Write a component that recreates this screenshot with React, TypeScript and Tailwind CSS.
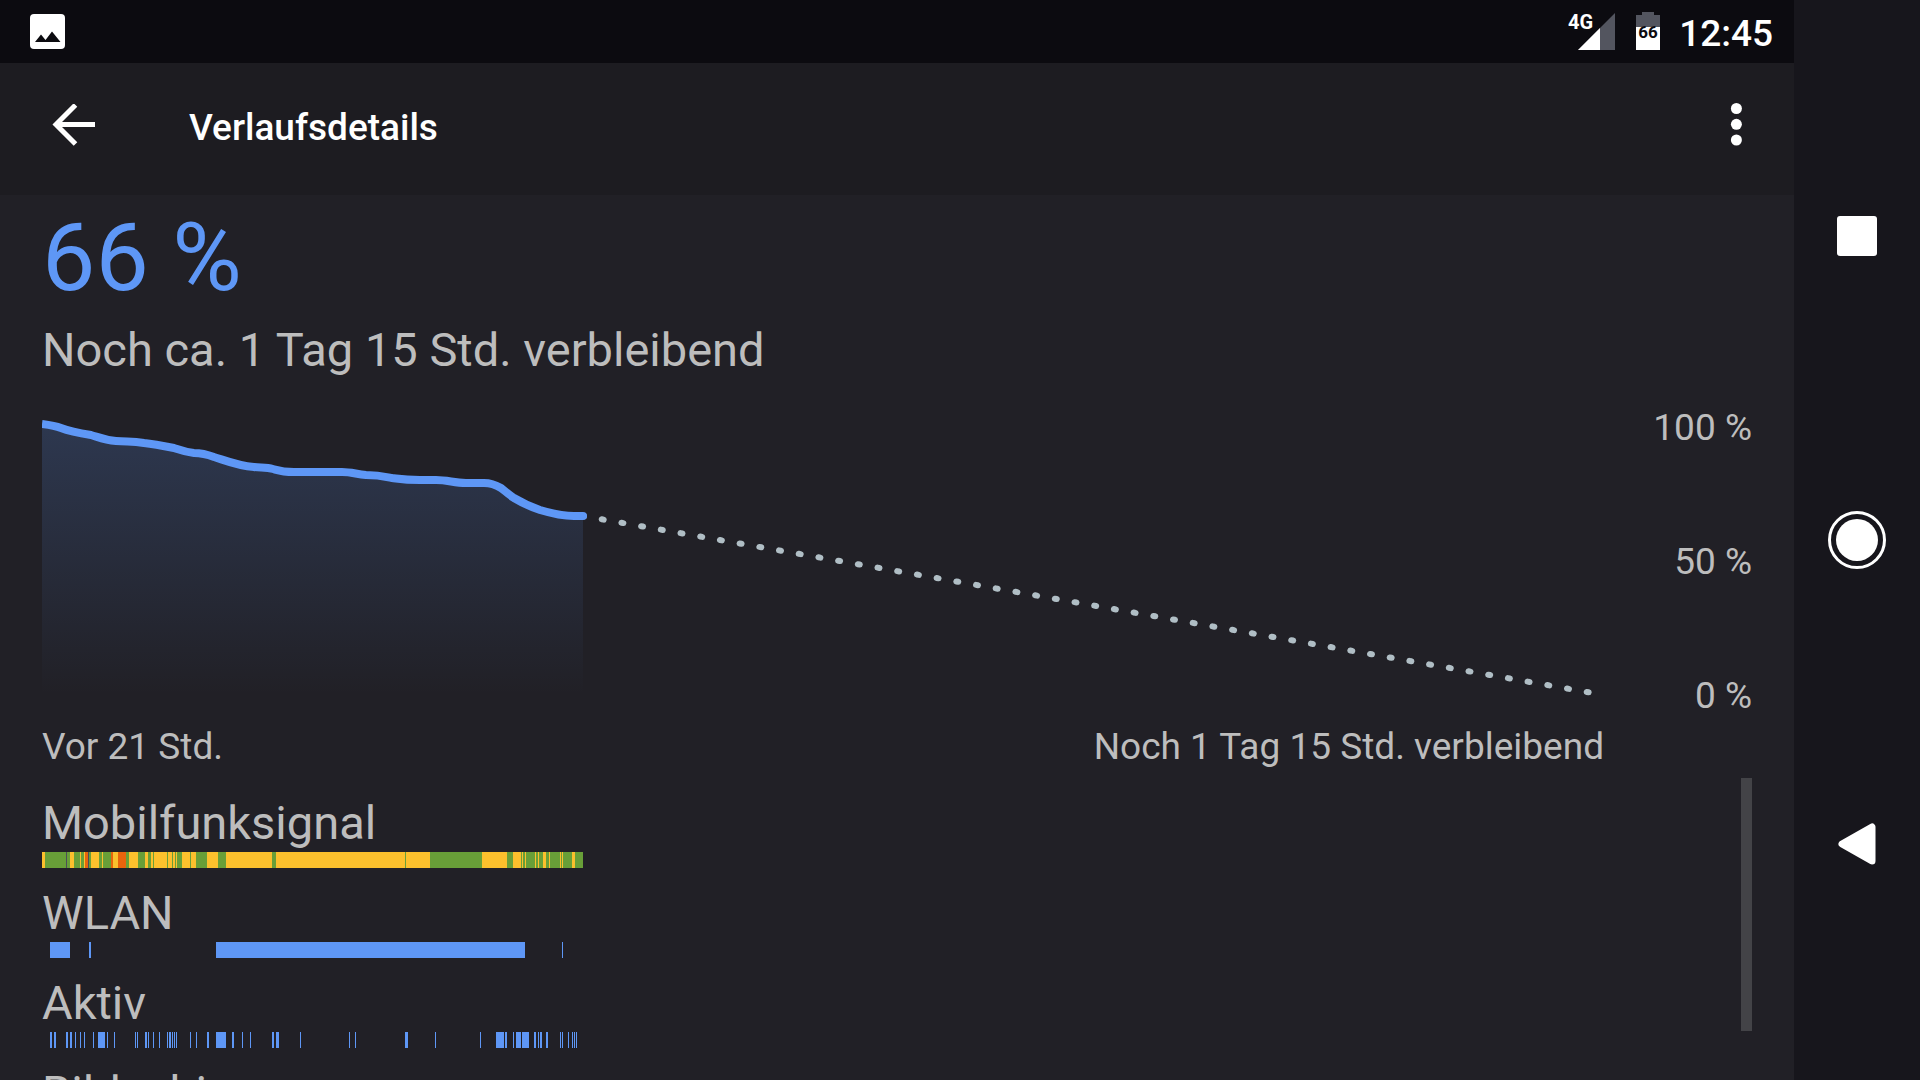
import React from "react";

type Span = [number, number];

// width of the time axis, the measured part ends at 541
const SPAN = 1562;

const LEVEL_PATH =
  "M0 24 C8 25 14 26 19 28 C24 30 36 33 49 35 C56 37 62 40 74 41 C86 42 90 41 102 43 C112 44 122 46 132 48 C138 50 142 52 152 53 C160 53 164 54 172 57 C182 60 196 66 212 67 C218 68 224 67 231 69 C238 71 240 72 252 72 L300 72 C309 72 314 74 324 75 C336 75 340 76 350 78 C358 79 362 80 378 80 L394 80 C406 80 412 83 424 83 L442 83 C450 83 454 85 459 88 C463 91 466 94 472 98 C482 104 492 108 498 110 C508 113 522 116 532 116 L541 116";

const COLORS = {
  green: "#689f38",
  yellow: "#fbc02d",
  orange: "#e8640c",
  gray: "#4c4e58",
  blue: "#5e97f6",
};

const greenSpans: Span[] = [
  [3, 24], [25, 28], [32, 38], [39, 42], [47, 49], [57, 60], [61, 69], [84, 87],
  [96, 103], [106, 109], [111, 112], [125, 126], [130, 131], [133, 134], [135, 140],
  [148, 149], [154, 165], [176, 184], [230, 234], [363, 364], [388, 440], [465, 471],
  [479, 480], [481, 483], [484, 493], [494, 496], [497, 501], [504, 507], [508, 518],
  [519, 520], [521, 530], [533, 541],
];

const activeSpans: Span[] = [
  [8, 10], [12, 14], [24, 26], [28, 30], [33, 34], [38, 39], [42, 43], [51, 52],
  [56, 63], [65, 66], [72, 73], [93, 94], [95, 96], [103, 105], [106, 107], [111, 112],
  [117, 118], [125, 126], [127, 129], [130, 131], [132, 133], [134, 135], [148, 149],
  [154, 155], [165, 167], [174, 184], [190, 192], [200, 201], [208, 209], [230, 232],
  [234, 237], [258, 259], [307, 308], [313, 314], [363, 366], [393, 394], [438, 439],
  [454, 462], [463, 465], [471, 472], [474, 479], [480, 487], [492, 494], [496, 497],
  [498, 500], [504, 506], [518, 519], [520, 521], [526, 527], [530, 531], [532, 533],
  [534, 535],
];

const rows = [
  {
    label: "Mobilfunksignal",
    layers: [
      { color: COLORS.yellow, spans: [[0, 541]] as Span[] },
      { color: COLORS.green, spans: greenSpans },
      { color: COLORS.orange, spans: [[43, 46], [69, 71], [76, 84]] as Span[] },
      { color: COLORS.gray, spans: [[24, 25], [46, 47]] as Span[] },
    ],
  },
  {
    label: "WLAN",
    layers: [{ color: COLORS.blue, spans: [[8, 28], [47, 49], [174, 483], [520, 521]] as Span[] }],
  },
  { label: "Aktiv", layers: [{ color: COLORS.blue, spans: activeSpans }] },
  { label: "Bildschirm an", layers: [] },
];

const StatusBar: React.FC = () => (
  <div className="flex h-[63px] shrink-0 items-center justify-between bg-[#0c0b10] pl-[30px] pr-[21px]">
    <svg className="h-[35px] w-[35px]" viewBox="0 0 35 35">
      <rect width="35" height="35" rx="4" fill="#fff" />
      <path d="M5 28 L11 20.5 L15.5 26 L22 17.5 L30.5 28 Z" fill="#0c0b10" />
    </svg>
    <div className="flex items-center">
      <svg className="h-[63px] w-[48px]" viewBox="0 0 48 63">
        <path d="M47 13 V50 H10 Z" fill="#53555f" />
        <path d="M32 28 V50 H10 Z" fill="#fff" />
        <text x="0" y="29" fontSize="20" fontWeight="700" fill="#fff" className="font-['Roboto',sans-serif]">
          4G
        </text>
      </svg>
      <svg className="ml-5 h-[63px] w-6" viewBox="0 0 24 63">
        <path d="M0 15 H6 V12 H18 V15 H24 V27 H0 Z" fill="#53555f" />
        <path d="M0 27 H24 V50 H0 Z" fill="#fff" />
        <text x="12" y="38" textAnchor="middle" fontSize="17" fontWeight="700" fill="#0c0b10" className="font-['Roboto',sans-serif]">
          66
        </text>
      </svg>
      <span className="ml-[19px] pt-1 text-[37px] font-medium leading-[44px]">12:45</span>
    </div>
  </div>
);

const Toolbar: React.FC = () => (
  <header className="flex h-[132px] shrink-0 items-center bg-[#1d1c21] pb-2 pl-[42px] pr-[26px]">
    <button type="button" aria-label="Zurück" className="flex h-16 w-16 items-center">
      <svg className="h-[42px] w-[64px]" viewBox="0 0 64 42">
        <path d="M53 20.5 H14 M33.500 1 L14 20.5 L33.500 40" fill="none" stroke="#fff" strokeWidth="5" />
      </svg>
    </button>
    <h1 className="ml-[83px] flex-1 pt-1.5 text-[37px] font-medium leading-[44px]">Verlaufsdetails</h1>
    <button type="button" aria-label="Weitere Optionen" className="flex h-16 w-16 items-center justify-center">
      <svg className="h-[44px] w-3" viewBox="0 0 12 44">
        <circle cx="6.400" cy="5.500" r="5.500" fill="#fff" />
        <circle cx="6.400" cy="21.300" r="5.500" fill="#fff" />
        <circle cx="6.400" cy="37" r="5.500" fill="#fff" />
      </svg>
    </button>
  </header>
);

const UsageChart: React.FC = () => (
  <div className="mt-[22px] flex h-[318px]">
    <svg className="h-[300px] min-w-0 flex-1" viewBox={`0 0 ${SPAN} 300`} preserveAspectRatio="none">
      <defs>
        <linearGradient id="level" x1="0" y1="24" x2="0" y2="295" gradientUnits="userSpaceOnUse">
          <stop offset="0" stopColor="#5e97f6" stopOpacity="0.2" />
          <stop offset="1" stopColor="#5e97f6" stopOpacity="0" />
        </linearGradient>
      </defs>
      <path d={`${LEVEL_PATH} V295 H0 Z`} fill="url(#level)" />
      <path
        d="M541 116 L1562 295"
        fill="none"
        stroke="#b0bec5"
        strokeWidth="6"
        strokeLinecap="round"
        strokeDasharray="2 18"
        strokeDashoffset="-19"
      />
      <path d={LEVEL_PATH} fill="none" stroke="#5e97f6" strokeWidth="8" />
      <circle cx="541" cy="116" r="4" fill="#5e97f6" />
    </svg>
    <div className="flex w-[148px] flex-col justify-between pt-1.5 text-right text-[37px] leading-[44px]">
      <span>100 %</span>
      <span>50 %</span>
      <span>0 %</span>
    </div>
  </div>
);

const NavBar: React.FC = () => (
  <nav className="flex w-[126px] shrink-0 flex-col items-center justify-between bg-[#17161c] py-[200px]">
    <button type="button" aria-label="Übersicht" className="flex h-[72px] w-[72px] items-center justify-center">
      <span className="h-10 w-10 rounded-[3px] bg-white" />
    </button>
    <button type="button" aria-label="Startbildschirm" className="flex h-[72px] w-[72px] items-center justify-center">
      <svg className="h-[58px] w-[58px]" viewBox="0 0 58 58">
        <circle cx="29" cy="29" r="27.500" fill="none" stroke="#fff" strokeWidth="3" />
        <circle cx="29" cy="29" r="21" fill="#fff" />
      </svg>
    </button>
    <button type="button" aria-label="Zurück" className="flex h-[72px] w-[72px] items-center justify-center">
      <svg className="h-[42px] w-[38px]" viewBox="0 0 38 42">
        <path d="M4 21 L34 4 V38 Z" fill="#fff" stroke="#fff" strokeWidth="7" strokeLinejoin="round" />
      </svg>
    </button>
  </nav>
);

const App: React.FC = () => {
  return (
    <div className="flex h-screen overflow-hidden bg-[#212026] font-['Roboto',sans-serif] text-white">
      <div className="flex min-w-0 flex-1 flex-col">
        <StatusBar />
        <Toolbar />
        <main className="flex min-h-0 flex-1 flex-col px-[42px] text-[#bdbdbd]">
          <p className="mt-[7px] text-[95px] leading-[112px] text-[#5e97f6]">66 %</p>
          <p className="mt-2 text-[47px] leading-[56px]">Noch ca. 1 Tag 15 Std. verbleibend</p>
          <UsageChart />
          <div className="mt-[7px] flex justify-between pr-[148px] text-[37px] leading-[44px]">
            <span>Vor 21 Std.</span>
            <span>Noch 1 Tag 15 Std. verbleibend</span>
          </div>
          <div className="mt-[9px] flex min-h-0 flex-1 overflow-hidden">
            <div className="mr-[137px] flex min-w-0 flex-1 flex-col gap-[18px] pt-[18px]">
              {rows.map((row) => (
                <section key={row.label}>
                  <h2 className="pb-0.5 text-[47px] leading-[54px]">{row.label}</h2>
                  <svg className="h-4 w-full" viewBox={`0 0 ${SPAN} 16`} preserveAspectRatio="none" shapeRendering="crispEdges">
                    {row.layers.map((layer) =>
                      layer.spans.map(([from, to]) => (
                        <rect key={`${layer.color}-${from}`} x={from} width={to - from} height="16" fill={layer.color} />
                      ))
                    )}
                  </svg>
                </section>
              ))}
            </div>
            <div className="h-[253px] w-[11px] bg-[#434347]" />
          </div>
        </main>
      </div>
      <NavBar />
    </div>
  );
};

export default App;
